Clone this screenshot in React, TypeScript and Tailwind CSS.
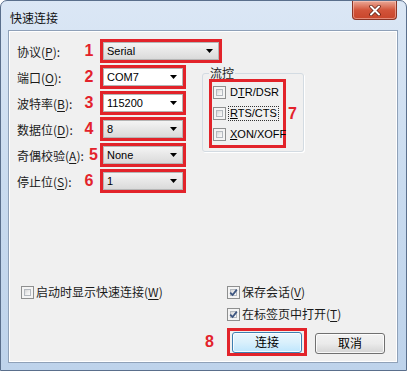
import React from 'react';

const cjk = "font-['Noto_Sans_CJK_SC','Noto_Sans_CJK_JP',sans-serif]";
const lat = "font-['Liberation_Sans',Arial,sans-serif]";

function Acc({ text, k, colon }: { text: string; k: string; colon?: boolean }) {
    return (
        <span className={`${cjk} text-[12px] text-[#1b1b1b] whitespace-nowrap`}>
            {text}(<span className="underline underline-offset-2">{k}</span>){colon ? ':' : ''}
        </span>
    );
}

function Num({ n, className = '' }: { n: string; className?: string }) {
    return (
        <span className={`${lat} text-[16px] font-bold leading-none text-[#e3222b] text-center ${className}`}>{n}</span>
    );
}

function Combo({ value, wide, white }: { value: string; wide?: boolean; white?: boolean }) {
    return (
        <div className={`flex h-[24px] border-[3px] border-[#e2232a] ${wide ? 'w-[122px]' : 'w-[86px]'}`}>
            <div
                className={`flex-1 flex items-center justify-between pl-[3px] pr-[5px] border border-[#b5b5b5] ${
                    white ? 'bg-white' : 'bg-gradient-to-b from-[#f4f4f4] to-[#dadada]'
                }`}
            >
                <span className={`${lat} text-[11px] leading-none text-black`}>{value}</span>
                <svg width="7" height="4" viewBox="0 0 7 4">
                    <path d="M0 0h7L3.5 4z" fill="#000" />
                </svg>
            </div>
        </div>
    );
}

function Row({ label, k, n, value, wide, white, numClass }: {
    label: string; k: string; n: string; value: string; wide?: boolean; white?: boolean; numClass?: string;
}) {
    return (
        <div className="flex items-center h-[24px] pl-[8px]">
            <div className="w-[65px]">
                <Acc text={label} k={k} colon />
            </div>
            <Num n={n} className={`w-[14px] ${numClass ?? ''}`} />
            <div className="ml-[4px]">
                <Combo value={value} wide={wide} white={white} />
            </div>
        </div>
    );
}

function Check({ checked }: { checked?: boolean }) {
    return (
        <span className="w-[13px] h-[13px] shrink-0 border border-[#8e8f8f] bg-[#f4f4f4] p-[2px]">
            <span className="flex items-center justify-center w-full h-full border border-[#b4b9bf] bg-gradient-to-br from-[#d6d6d6] via-[#ececec] to-[#fcfcfc]">
                {checked && (
                    <svg width="9" height="9" viewBox="0 0 9 9" className="-m-[2px]">
                        <path d="M1.2 4.6 3.6 7 7.8 1.6" fill="none" stroke="#3c5580" strokeWidth="1.8" />
                    </svg>
                )}
            </span>
        </span>
    );
}

function FlowItem({ pre, k, post, focus }: { pre: string; k: string; post: string; focus?: boolean }) {
    return (
        <div className="flex items-center h-[21px] pl-[1px] gap-[2px]">
            <Check />
            <span className={`${lat} text-[11px] leading-[13px] text-black px-[1px] ${focus ? 'border border-dotted border-[#333]' : 'border border-transparent'}`}>
                {pre}
                <span className="underline">{k}</span>
                {post}
            </span>
        </div>
    );
}

function Button({ label, primary }: { label: string; primary?: boolean }) {
    return (
        <button
            className={`w-[70px] h-[21px] rounded-[3px] border ${cjk} text-[12px] leading-none text-black shadow-[inset_0_0_0_1px_rgba(255,255,255,0.8)] ${
                primary
                    ? 'border-[#3c7fb1] bg-gradient-to-b from-[#eaf6fd] via-[#d9f0fc] to-[#bee6fd]'
                    : 'border-[#707070] bg-gradient-to-b from-[#f2f2f2] via-[#ebebeb] to-[#d4d4d4]'
            }`}
        >
            {label}
        </button>
    );
}

export default function App() {
    return (
        <div className="w-[407px] h-[371px] flex flex-col border border-[#5a6f8c] rounded-t-[7px] bg-gradient-to-b from-[#dbe7f5] via-[#c9dbef] to-[#bed3eb] pl-[7px] pr-[8px] pb-[7px]">
            <div className="h-[29px] flex items-start justify-between">
                <span className={`${cjk} pl-[2px] pt-[9px] text-[12px] leading-[16px] text-[#111]`}>快速连接</span>
                <div className="mr-[1px] w-[45px] h-[19px] rounded-b-[4px] border border-t-0 border-[#8a3526] bg-gradient-to-b from-[#e9a897] via-[#d2543a] to-[#c8452b] flex items-center justify-center shadow-[inset_0_0_0_1px_rgba(255,210,200,0.5)]">
                    <svg width="12" height="11" viewBox="0 0 12 11">
                        <path d="M2 1.5 10 9.5M10 1.5 2 9.5" stroke="#5a1b10" strokeWidth="3.4" strokeLinecap="round" />
                        <path d="M2 1.5 10 9.5M10 1.5 2 9.5" stroke="#fff" strokeWidth="2" strokeLinecap="round" />
                    </svg>
                </div>
            </div>

            <div className="h-[333px] flex flex-col border border-[#8fa1b8] bg-[#f0f0f0] shadow-[inset_0_0_0_1px_#ffffff]">
                <div className="pt-[8px]">
                    <Row label="协议" k="P" n="1" value="Serial" wide />
                    <div className="flex mt-[2px]">
                        <div className="w-[186px] flex flex-col gap-[2px]">
                            <Row label="端口" k="O" n="2" value="COM7" white />
                            <Row label="波特率" k="B" n="3" value="115200" white />
                            <Row label="数据位" k="D" n="4" value="8" />
                            <Row label="奇偶校验" k="A" n="5" value="None" numClass="pl-[7px]" />
                            <Row label="停止位" k="S" n="6" value="1" />
                        </div>
                        <fieldset className="ml-[7px] w-[98px] h-[87px] border border-[#d3dbe2] rounded-[3px] px-[6px] shadow-[1px_1px_0_#ffffff]">
                            <legend className={`${cjk} px-[1px] text-[12px] leading-[16px] text-[#1b1b1b]`}>流控</legend>
                            <div className="flex items-center -mt-[2px]">
                                <div className="w-[77px] h-[69px] border-[3px] border-[#e2232a] flex flex-col">
                                    <FlowItem pre="D" k="T" post="R/DSR" />
                                    <FlowItem pre="" k="R" post="TS/CTS" focus />
                                    <FlowItem pre="" k="X" post="ON/XOFF" />
                                </div>
                                <Num n="7" className="ml-[2px]" />
                            </div>
                        </fieldset>
                    </div>
                </div>

                <div className="mt-auto flex pb-[6px]">
                    <div className="w-[218px] pl-[12px] flex flex-col justify-between">
                        <div className="flex items-center h-[22px] gap-[2px]">
                            <Check />
                            <Acc text="启动时显示快速连接" k="W" />
                        </div>
                        <Num n="8" className="self-end mr-[13px] mb-[6px]" />
                    </div>
                    <div className="flex flex-col">
                        <div className="flex items-center h-[22px] gap-[2px]">
                            <Check checked />
                            <Acc text="保存会话" k="V" />
                        </div>
                        <div className="flex items-center h-[22px] gap-[2px]">
                            <Check checked />
                            <Acc text="在标签页中打开" k="T" />
                        </div>
                        <div className="flex items-center mt-[3px]">
                            <div className="w-[80px] h-[28px] border-[3px] border-[#e2232a] flex items-center justify-center">
                                <Button label="连接" primary />
                            </div>
                            <div className="ml-[8px]">
                                <Button label="取消" />
                            </div>
                        </div>
                    </div>
                </div>
            </div>
        </div>
    );
}
